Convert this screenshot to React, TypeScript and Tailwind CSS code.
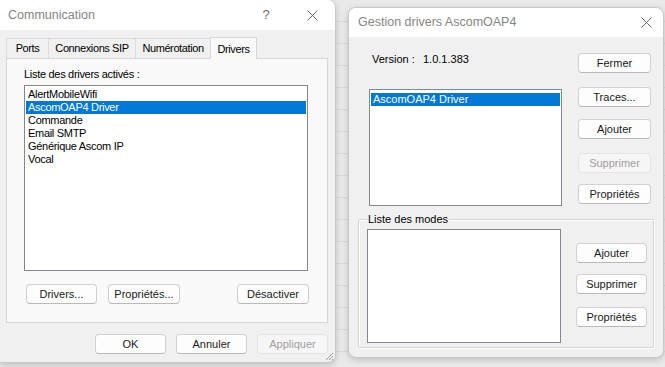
import React from 'react';

const Btn: React.FC<{ label: string; w?: string; disabled?: boolean; className?: string }> = ({
  label,
  w = 'w-[71px]',
  disabled = false,
  className = '',
}) => (
  <div
    className={`${w} h-[20px] shrink-0 flex items-center justify-center rounded-[4px] border text-[11px] leading-none ${
      disabled
        ? 'bg-[#f6f6f6] border-[#e4e4e4] text-[#a0a0a0]'
        : 'bg-[#fdfdfd] border-[#d1d1d1] border-b-[#b9b9b9] text-[#1a1a1a]'
    } ${className}`}
  >
    {label}
  </div>
);

const CloseIcon: React.FC = () => (
  <svg width="11" height="11" viewBox="0 0 11 11" className="text-[#6b6b6b]">
    <path d="M0.5 0.5L10.5 10.5M10.5 0.5L0.5 10.5" stroke="currentColor" strokeWidth="1" />
  </svg>
);

const drivers = ['AlertMobileWifi', 'AscomOAP4 Driver', 'Commande', 'Email SMTP', 'Générique Ascom IP', 'Vocal'];

const tabs = [
  { label: 'Ports', w: 'w-[42px]' },
  { label: 'Connexions SIP', w: 'w-[87px]' },
  { label: 'Numérotation', w: 'w-[75px]' },
];

const App: React.FC = () => {
  return (
    <div className="w-[665px] h-[367px] overflow-hidden flex items-start bg-[#e9e9e9] bg-[repeating-linear-gradient(to_bottom,transparent_0,transparent_21px,#d9d9d9_21px,#d9d9d9_22px)] font-['Liberation_Sans',Arial,sans-serif] text-black select-none">
      {/* Communication */}
      <div className="relative w-[336px] h-[363px] shrink-0 flex flex-col bg-[#f0f0f0] rounded-r-[8px] border-r border-b border-[#c9c9c9] shadow-[0_2px_6px_rgba(0,0,0,0.18)]">
        <div className="h-[30px] shrink-0 flex items-center bg-white rounded-tr-[8px]">
          <span className="pl-[8px] text-[12.5px] text-[#858585]">Communication</span>
          <span className="ml-auto w-[46px] text-center text-[13px] text-[#6b6b6b]">?</span>
          <span className="w-[46px] flex justify-center">
            <CloseIcon />
          </span>
        </div>

        <div className="pl-[6px] pt-[7px] flex items-end h-[28px] text-[11px] tracking-[-0.4px]">
          {tabs.map((t) => (
            <div
              key={t.label}
              className={`${t.w} h-[20px] flex items-center justify-center border-t border-l border-[#dcdcdc] bg-[#f0f0f0]`}
            >
              {t.label}
            </div>
          ))}
          <div className="w-[47px] h-[22px] -mb-px relative z-10 flex items-start justify-center pt-[3px] border-t border-x border-[#d6d6d6] bg-[#f9f9f9]">
            Drivers
          </div>
        </div>

        <div className="ml-[6px] w-[322px] h-[265px] shrink-0 border border-[#d6d6d6] bg-[#f9f9f9] pl-[17px] pt-[9px] text-[11px] tracking-[-0.3px]">
          <div className="leading-[13px]">Liste des drivers activés :</div>
          <div className="mt-[4px] w-[284px] h-[186px] border border-[#828790] bg-white p-px pt-[2px]">
            {drivers.map((d) => (
              <div
                key={d}
                className={`h-[13px] leading-[13px] pl-[2px] ${d === 'AscomOAP4 Driver' ? 'bg-[#0078d7] text-white' : ''}`}
              >
                {d}
              </div>
            ))}
          </div>
          <div className="mt-[13px] ml-[2px] w-[283px] flex tracking-normal">
            <Btn label="Drivers..." />
            <Btn label="Propriétés..." w="w-[72px]" className="ml-[11px]" />
            <Btn label="Désactiver" w="w-[72px]" className="ml-auto" />
          </div>
        </div>

        <div className="mt-[11px] pr-[7px] flex justify-end gap-[10px]">
          <Btn label="OK" />
          <Btn label="Annuler" />
          <Btn label="Appliquer" disabled />
        </div>

        <svg width="10" height="10" viewBox="0 0 10 10" className="absolute right-[1px] bottom-[1px] text-[#9a9a9a]">
          <path d="M9 2L2 9M9 5L5 9M9 8L8 9" stroke="currentColor" strokeWidth="1" />
        </svg>
      </div>

      {/* Gestion drivers AscomOAP4 */}
      <div className="ml-[12px] mt-[7px] w-[316px] h-[351px] shrink-0 flex flex-col bg-[#f0f0f0] rounded-[8px] border border-[#c9c9c9] shadow-[0_2px_6px_rgba(0,0,0,0.18)] overflow-hidden">
        <div className="h-[29px] shrink-0 flex items-center bg-white">
          <span className="pl-[9px] text-[12.5px] text-[#858585]">Gestion drivers AscomOAP4</span>
          <span className="ml-auto w-[34px] flex justify-center">
            <CloseIcon />
          </span>
        </div>

        <div className="pl-[20px] pt-[16px] flex text-[11px]">
          <div className="w-[193px]">
            <div className="ml-[3px] h-[13px] leading-[13px] flex">
              <span className="w-[51px]">Version :</span>
              <span>1.0.1.383</span>
            </div>
            <div className="mt-[23px] h-[117px] border border-[#828790] bg-white p-px pt-[3px]">
              <div className="h-[13px] leading-[13px] pl-[2px] bg-[#0078d7] text-white">AscomOAP4 Driver</div>
            </div>
          </div>
          <div className="ml-[16px] flex flex-col">
            <Btn label="Fermer" w="w-[73px]" />
            <Btn label="Traces..." w="w-[73px]" className="mt-[14px]" />
            <Btn label="Ajouter" w="w-[73px]" className="mt-[12px]" />
            <Btn label="Supprimer" w="w-[73px]" disabled className="mt-[14px]" />
            <Btn label="Propriétés" w="w-[73px]" className="mt-[11px]" />
          </div>
        </div>

        <div className="mx-[9px] mt-[13px] h-[129px] border border-[#d5d5d5] rounded-[2px] shadow-[inset_1px_1px_0_#ffffff,1px_1px_0_#ffffff] pl-[8px] text-[11px]">
          <span className="block w-fit -mt-[7px] ml-[0px] px-px leading-[13px] bg-[#f0f0f0]">Liste des modes</span>
          <div className="mt-[3px] flex">
            <div className="w-[194px] h-[114px] border border-[#828790] bg-white" />
            <div className="ml-[15px] mt-[14px] flex flex-col">
              <Btn label="Ajouter" />
              <Btn label="Supprimer" className="mt-[11px]" />
              <Btn label="Propriétés" className="mt-[13px]" />
            </div>
          </div>
        </div>
      </div>
    </div>
  );
};

export default App;
